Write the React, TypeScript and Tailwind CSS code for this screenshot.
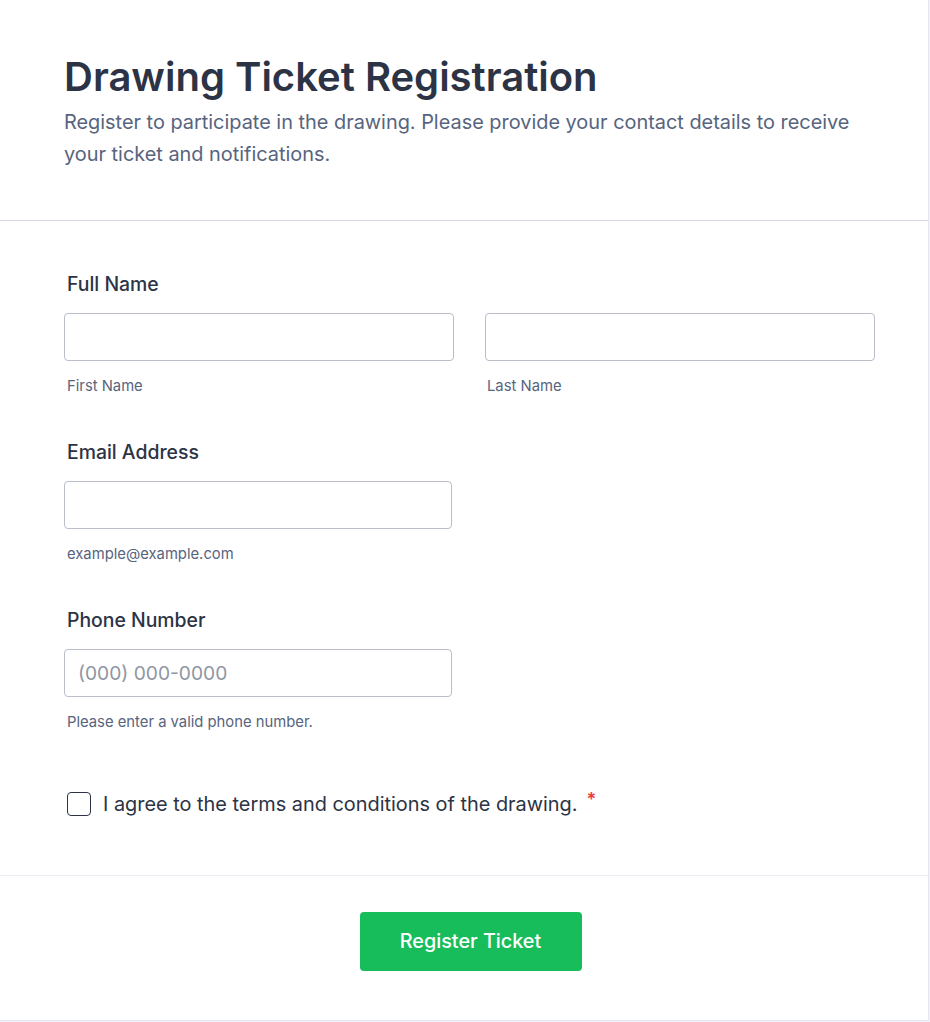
import React from "react";

function Field({
  label,
  sub,
  placeholder,
  width = "w-[388px]",
}: {
  label: string;
  sub: string;
  placeholder?: string;
  width?: string;
}) {
  return (
    <div className="flex flex-col">
      <label className="ml-[3px] text-[19.4px] leading-6 font-medium text-[#2c3345]">{label}</label>
      <input
        type="text"
        placeholder={placeholder}
        className={`mt-[17px] h-12 ${width} rounded-[4px] border border-[#b8bdc9] bg-white px-[13px] text-[19.2px] text-[#2c3345] placeholder:text-[#8f96a3] focus:outline-none`}
      />
      <span className="ml-[3px] mt-[15px] text-[14.8px] leading-5 text-[#57647e]">{sub}</span>
    </div>
  );
}

export default function App() {
  return (
    <div
      className="min-h-[1022px] w-full bg-[#f3f3fe]"
      style={{ fontFamily: "Inter, 'Noto Sans', sans-serif" }}
    >
      <div className="h-[1021px] w-[929px] border-r border-b border-[#e4e5ee] bg-white">
        {/* Header */}
        <div className="border-b border-[#d8dae9] px-16 pt-[53px] pb-[50px]">
          <h1 className="text-[40px] leading-[48px] font-semibold text-[#2c3345]">
            Drawing Ticket Registration
          </h1>
          <p className="mt-[5px] text-[19.9px] leading-8 text-[#57647e]">
            Register to participate in the drawing. Please provide your contact details to receive
            your ticket and notifications.
          </p>
        </div>

        {/* Fields */}
        <div className="border-b border-[#ebecf3] pl-16 pt-[51px] pb-[59px]">
          <div className="flex flex-col">
            <label className="ml-[3px] text-[19.4px] leading-6 font-medium text-[#2c3345]">
              Full Name
            </label>
            <div className="mt-[17px] grid w-[811px] grid-cols-2 gap-[31px]">
              <div className="flex flex-col">
                <input
                  type="text"
                  className="h-12 rounded-[4px] border border-[#b8bdc9] bg-white px-[13px] focus:outline-none"
                />
                <span className="ml-[3px] mt-[15px] text-[14.8px] leading-5 text-[#57647e]">First Name</span>
              </div>
              <div className="flex flex-col">
                <input
                  type="text"
                  className="h-12 rounded-[4px] border border-[#b8bdc9] bg-white px-[13px] focus:outline-none"
                />
                <span className="ml-[2px] mt-[15px] text-[14.8px] leading-5 text-[#57647e]">Last Name</span>
              </div>
            </div>
          </div>

          <div className="mt-[44px]">
            <Field label="Email Address" sub="example@example.com" />
          </div>
          <div className="mt-[44px]">
            <Field
              label="Phone Number"
              sub="Please enter a valid phone number."
              placeholder="(000) 000-0000"
            />
          </div>

          <label className="ml-[3px] mt-[60px] flex items-center gap-3">
            <span className="h-6 w-6 rounded-[4px] border border-[#2c3345] bg-white" />
            <span className="text-[19.9px] leading-6 text-[#2c3345]">
              I agree to the terms and conditions of the drawing.
            </span>
            <span className="-mt-2 -ml-[3px] text-[18px] leading-6 font-semibold text-[#f23a3c]">*</span>
          </label>
        </div>

        {/* Footer */}
        <div className="flex justify-center pl-16 pr-[51px] pt-[36px]">
          <button className="h-[59px] w-[222px] rounded-[4px] bg-[#18bd5b] text-[19.8px] font-medium text-white">
            Register Ticket
          </button>
        </div>
      </div>
    </div>
  );
}
